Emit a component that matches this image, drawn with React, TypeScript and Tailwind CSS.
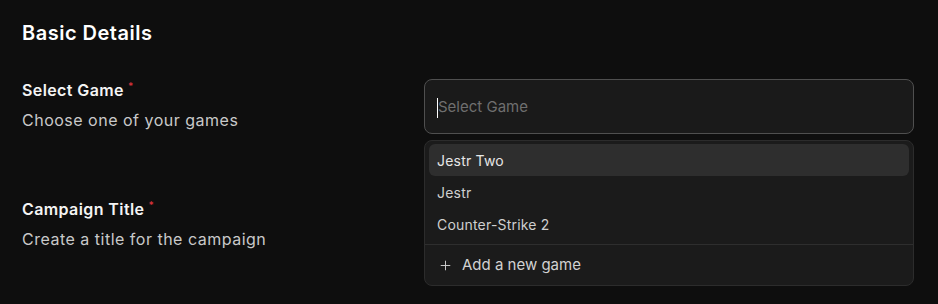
import { Plus } from 'lucide-react'

const games = ['Jestr Two', 'Jestr', 'Counter-Strike 2']

function FieldLabel({ title, hint }: { title: string; hint: string }) {
  return (
    <div className="flex flex-col">
      <div className="flex items-start text-[16px] font-semibold tracking-[0.4px] text-[#f4f4f4] leading-5">
        {title}
        <span className="ml-[4px] text-[10px] leading-3 text-[#d3313a]">*</span>
      </div>
      <div className="mt-[10px] text-[16px] tracking-[0.5px] leading-5 text-[#c9c9c9]">{hint}</div>
    </div>
  )
}

export default function App() {
  return (
    <div
      className="min-h-screen w-full bg-[#0e0e0e] pl-[22px] pr-[24px] pt-[22px]"
      style={{ fontFamily: 'Inter, "Noto Sans", sans-serif' }}
    >
      <h2 className="text-[20px] font-semibold tracking-[0.5px] leading-[22px] text-white">Basic Details</h2>

      <div className="mt-[35px] flex flex-col gap-[65px]">
        {/* Select game */}
        <div className="flex justify-between">
          <div className="pt-[1px]">
            <FieldLabel title="Select Game" hint="Choose one of your games" />
          </div>
          <div className="relative w-[490px]">
            <div className="flex h-[55px] items-center rounded-[8px] border border-[#4f4f4f] bg-[#1a1a1a] px-[12px] pt-[2px]">
              <span className="h-[20px] w-px bg-white" />
              <span className="text-[15px] text-[#6f6f6f]">Select Game</span>
            </div>

            {/* dropdown */}
            <div className="absolute left-0 right-0 top-[61px] z-10 rounded-[8px] border border-[#2c2c2c] bg-[#1b1b1b] pt-[3px]">
              <div className="px-[4px]">
                {games.map((g, i) => (
                  <div
                    key={g}
                    className={
                      'flex h-[32px] items-center rounded-[6px] px-[8px] text-[14px] tracking-[0.2px] ' +
                      (i === 0 ? 'bg-[#2e2e2e] text-[#e6e6e6]' : 'text-[#cfcfcf]')
                    }
                  >
                    {g}
                  </div>
                ))}
              </div>
              <div className="mt-[4px] border-t border-[#2e2e2e]" />
              <div className="flex h-[40px] items-center gap-[9px] px-[13px] text-[15px] text-[#d2d2d2]">
                <Plus size={15} strokeWidth={1.5} />
                Add a new game
              </div>
            </div>
          </div>
        </div>

        {/* Campaign title */}
        <div className="flex justify-between">
          <FieldLabel title="Campaign Title" hint="Create a title for the campaign" />
          <div className="w-[490px]">
            <div className="h-[55px] rounded-[8px] border border-[#4f4f4f] bg-[#1a1a1a]" />
          </div>
        </div>
      </div>
    </div>
  )
}
